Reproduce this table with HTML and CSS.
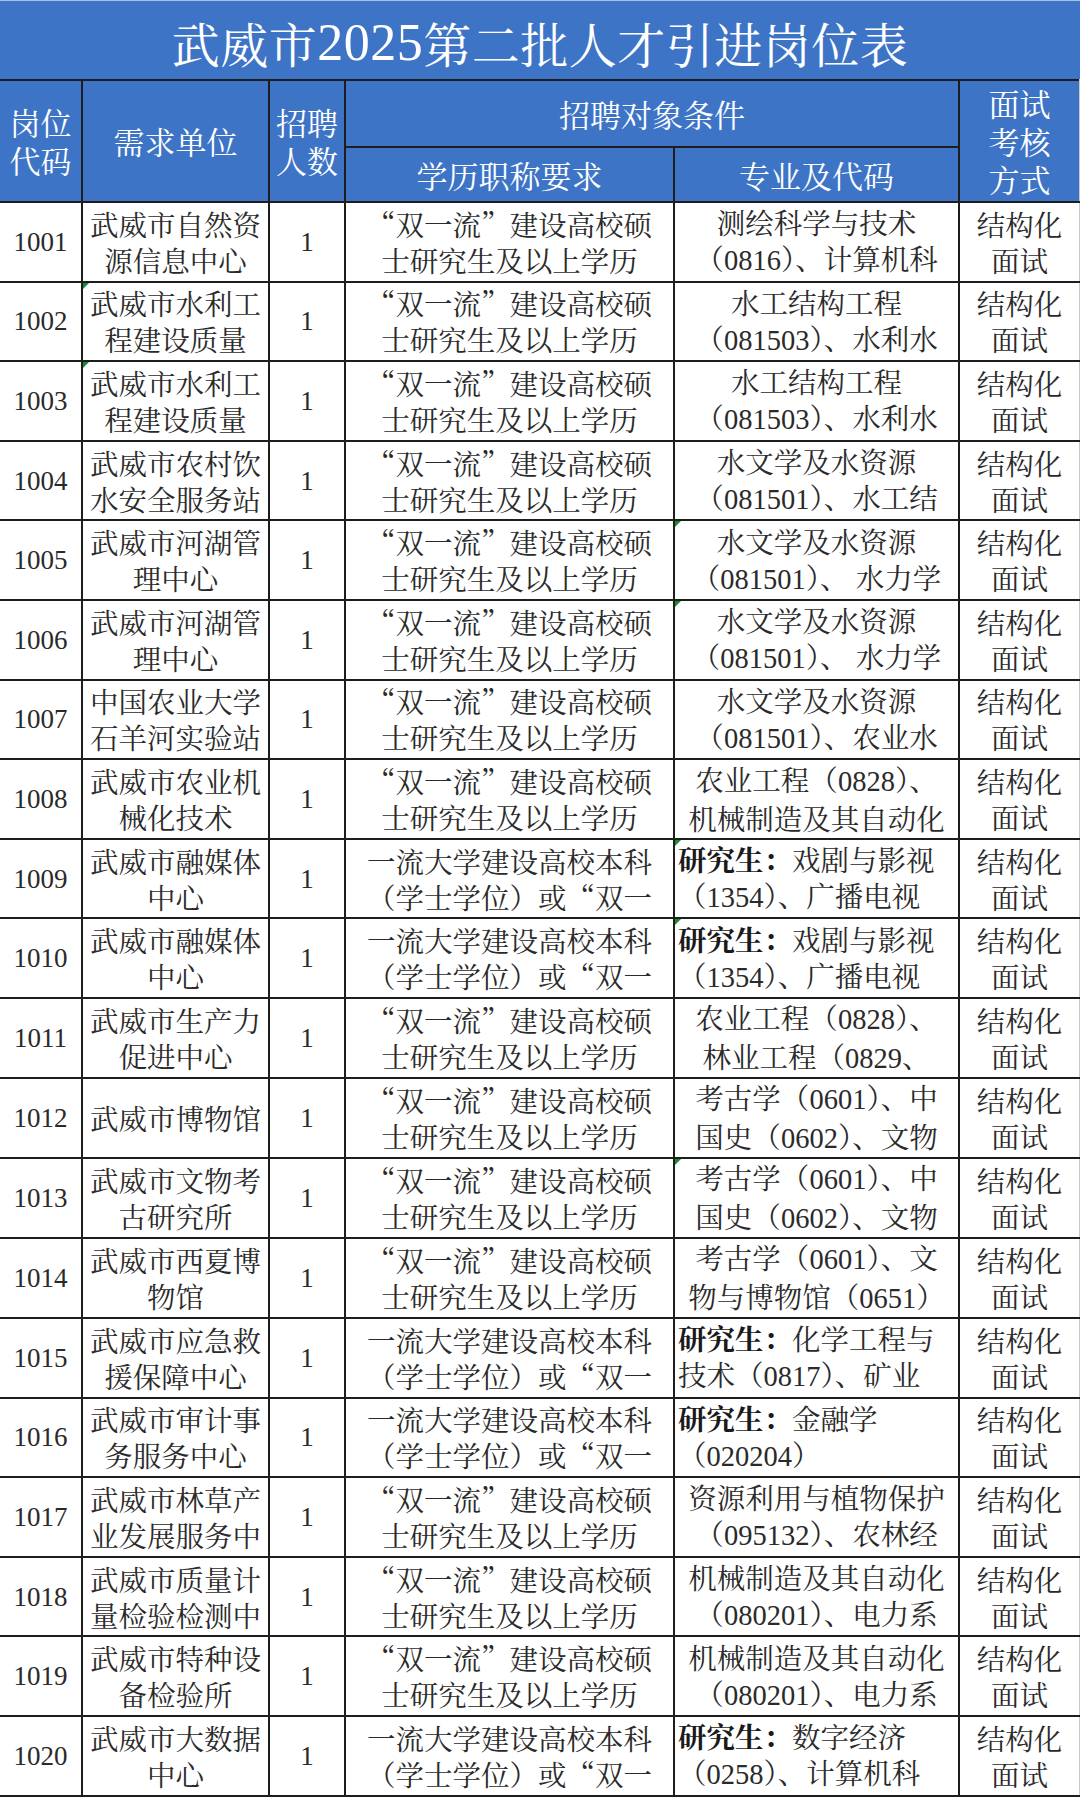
FILE: index.html
```html
<!DOCTYPE html>
<html lang="zh-CN">
<head>
<meta charset="utf-8">
<title>武威市2025第二批人才引进岗位表</title>
<link rel="stylesheet" href="styles.css">
</head>
<body>
<div class="title">武威市<span class="n">2025</span>第二批人才引进岗位表</div>
<table class="jobs">
  <colgroup>
    <col class="c-code"><col class="c-unit"><col class="c-num"><col class="c-edu"><col class="c-major"><col class="c-way">
  </colgroup>
  <thead>
    <tr class="h1">
      <th rowspan="2">岗位<br>代码</th>
      <th rowspan="2">需求单位</th>
      <th rowspan="2">招聘<br>人数</th>
      <th colspan="2">招聘对象条件</th>
      <th rowspan="2">面试<br>考核<br>方式</th>
    </tr>
    <tr class="h2">
      <th>学历职称要求</th>
      <th>专业及代码</th>
    </tr>
  </thead>
  <tbody>
    <tr><td class="n">1001</td><td>武威市自然资<br>源信息中心</td><td class="n">1</td><td>“双一流”建设高校硕<br>士研究生及以上学历</td><td>测绘科学与技术<br>（<span class="n">0816</span>）、计算机科</td><td>结构化<br>面试</td></tr>
    <tr><td class="n">1002</td><td class="mark">武威市水利工<br>程建设质量</td><td class="n">1</td><td>“双一流”建设高校硕<br>士研究生及以上学历</td><td>水工结构工程<br>（<span class="n">081503</span>）、水利水</td><td>结构化<br>面试</td></tr>
    <tr><td class="n">1003</td><td class="mark">武威市水利工<br>程建设质量</td><td class="n">1</td><td>“双一流”建设高校硕<br>士研究生及以上学历</td><td>水工结构工程<br>（<span class="n">081503</span>）、水利水</td><td>结构化<br>面试</td></tr>
    <tr><td class="n">1004</td><td>武威市农村饮<br>水安全服务站</td><td class="n">1</td><td>“双一流”建设高校硕<br>士研究生及以上学历</td><td>水文学及水资源<br>（<span class="n">081501</span>）、水工结</td><td>结构化<br>面试</td></tr>
    <tr><td class="n">1005</td><td>武威市河湖管<br>理中心</td><td class="n">1</td><td>“双一流”建设高校硕<br>士研究生及以上学历</td><td class="mark">水文学及水资源<br>（<span class="n">081501</span>）、 水力学</td><td>结构化<br>面试</td></tr>
    <tr><td class="n">1006</td><td>武威市河湖管<br>理中心</td><td class="n">1</td><td>“双一流”建设高校硕<br>士研究生及以上学历</td><td class="mark">水文学及水资源<br>（<span class="n">081501</span>）、 水力学</td><td>结构化<br>面试</td></tr>
    <tr><td class="n">1007</td><td>中国农业大学<br>石羊河实验站</td><td class="n">1</td><td>“双一流”建设高校硕<br>士研究生及以上学历</td><td>水文学及水资源<br>（<span class="n">081501</span>）、农业水</td><td>结构化<br>面试</td></tr>
    <tr><td class="n">1008</td><td>武威市农业机<br>械化技术</td><td class="n">1</td><td>“双一流”建设高校硕<br>士研究生及以上学历</td><td>农业工程（<span class="n">0828</span>）、<br>机械制造及其自动化</td><td>结构化<br>面试</td></tr>
    <tr><td class="n">1009</td><td>武威市融媒体<br>中心</td><td class="n">1</td><td>一流大学建设高校本科<br>（学士学位）或“双一</td><td class="left mark"><b>研究生：</b>戏剧与影视<br>（<span class="n">1354</span>）、广播电视</td><td>结构化<br>面试</td></tr>
    <tr><td class="n">1010</td><td>武威市融媒体<br>中心</td><td class="n">1</td><td>一流大学建设高校本科<br>（学士学位）或“双一</td><td class="left mark"><b>研究生：</b>戏剧与影视<br>（<span class="n">1354</span>）、广播电视</td><td>结构化<br>面试</td></tr>
    <tr><td class="n">1011</td><td>武威市生产力<br>促进中心</td><td class="n">1</td><td>“双一流”建设高校硕<br>士研究生及以上学历</td><td>农业工程（<span class="n">0828</span>）、<br>林业工程（<span class="n">0829</span>、</td><td>结构化<br>面试</td></tr>
    <tr><td class="n">1012</td><td>武威市博物馆</td><td class="n">1</td><td>“双一流”建设高校硕<br>士研究生及以上学历</td><td>考古学（<span class="n">0601</span>）、中<br>国史（<span class="n">0602</span>）、文物</td><td>结构化<br>面试</td></tr>
    <tr><td class="n">1013</td><td>武威市文物考<br>古研究所</td><td class="n">1</td><td>“双一流”建设高校硕<br>士研究生及以上学历</td><td class="mark">考古学（<span class="n">0601</span>）、中<br>国史（<span class="n">0602</span>）、文物</td><td>结构化<br>面试</td></tr>
    <tr><td class="n">1014</td><td>武威市西夏博<br>物馆</td><td class="n">1</td><td>“双一流”建设高校硕<br>士研究生及以上学历</td><td>考古学（<span class="n">0601</span>）、文<br>物与博物馆（<span class="n">0651</span>）</td><td>结构化<br>面试</td></tr>
    <tr><td class="n">1015</td><td>武威市应急救<br>援保障中心</td><td class="n">1</td><td>一流大学建设高校本科<br>（学士学位）或“双一</td><td class="left"><b>研究生：</b>化学工程与<br>技术（<span class="n">0817</span>）、矿业</td><td>结构化<br>面试</td></tr>
    <tr><td class="n">1016</td><td>武威市审计事<br>务服务中心</td><td class="n">1</td><td>一流大学建设高校本科<br>（学士学位）或“双一</td><td class="left"><b>研究生：</b>金融学<br>（<span class="n">020204</span>）</td><td>结构化<br>面试</td></tr>
    <tr><td class="n">1017</td><td>武威市林草产<br>业发展服务中</td><td class="n">1</td><td>“双一流”建设高校硕<br>士研究生及以上学历</td><td>资源利用与植物保护<br>（<span class="n">095132</span>）、农林经</td><td>结构化<br>面试</td></tr>
    <tr><td class="n">1018</td><td>武威市质量计<br>量检验检测中</td><td class="n">1</td><td>“双一流”建设高校硕<br>士研究生及以上学历</td><td>机械制造及其自动化<br>（<span class="n">080201</span>）、电力系</td><td>结构化<br>面试</td></tr>
    <tr><td class="n">1019</td><td>武威市特种设<br>备检验所</td><td class="n">1</td><td>“双一流”建设高校硕<br>士研究生及以上学历</td><td>机械制造及其自动化<br>（<span class="n">080201</span>）、电力系</td><td>结构化<br>面试</td></tr>
    <tr><td class="n">1020</td><td>武威市大数据<br>中心</td><td class="n">1</td><td>一流大学建设高校本科<br>（学士学位）或“双一</td><td class="left"><b>研究生：</b>数字经济<br>（<span class="n">0258</span>）、计算机科</td><td>结构化<br>面试</td></tr>
  </tbody>
</table>
</body>
</html>
```

FILE: styles.css
```css
html, body {
  margin: 0;
  padding: 0;
  background: #ffffff;
}

body {
  width: 1080px;
  font-family: "Noto Serif CJK SC", "Noto Sans CJK SC", serif;
  color: #262626;
}

.n {
  font-family: "Liberation Serif", "Noto Serif CJK SC", "Noto Sans CJK SC", serif;
}

.title {
  height: 79px;
  border-top: 1px solid #a8bfe3;
  background: #3e74c6;
  color: #ffffff;
  font-size: 48px;
  line-height: 1;
  display: flex;
  align-items: center;
  justify-content: center;
  padding-top: 6px;
  box-sizing: border-box;
  letter-spacing: 0.5px;
}

.title .n {
  font-size: 52px;
}

.jobs {
  width: 1080px;
  border-collapse: collapse;
  table-layout: fixed;
}

.c-code { width: 82px; }
.c-unit { width: 187px; }
.c-num { width: 76px; }
.c-edu { width: 329px; }
.c-major { width: 285px; }
.c-way { width: 121px; }

.jobs th,
.jobs td {
  border: 2px solid #1d1d1d;
  padding: 0;
  text-align: center;
  vertical-align: middle;
  white-space: nowrap;
}

.jobs tr > :first-child { border-left: none; }
.jobs tr > :last-child { border-right: 2px solid #c9c9c9; }

.jobs th {
  background: #3e74c6;
  color: #ffffff;
  font-weight: 400;
  font-size: 31px;
  line-height: 38px;
}

.jobs .h1 { height: 67px; }
.jobs .h2 { height: 55px; }

.jobs td {
  height: 77.6px;
  font-size: 28.5px;
  line-height: 36px;
  color: #2a2a2a;
  position: relative;
}

.jobs td.n {
  font-size: 27px;
}

.jobs td.left {
  text-align: left;
  padding-left: 3px;
}

.jobs td b {
  font-weight: 700;
  color: #1a1a1a;
}

.jobs td.mark::before {
  content: "";
  position: absolute;
  left: 0;
  top: 0;
  border-top: 6px solid #1b8a2e;
  border-right: 6px solid transparent;
}
```
